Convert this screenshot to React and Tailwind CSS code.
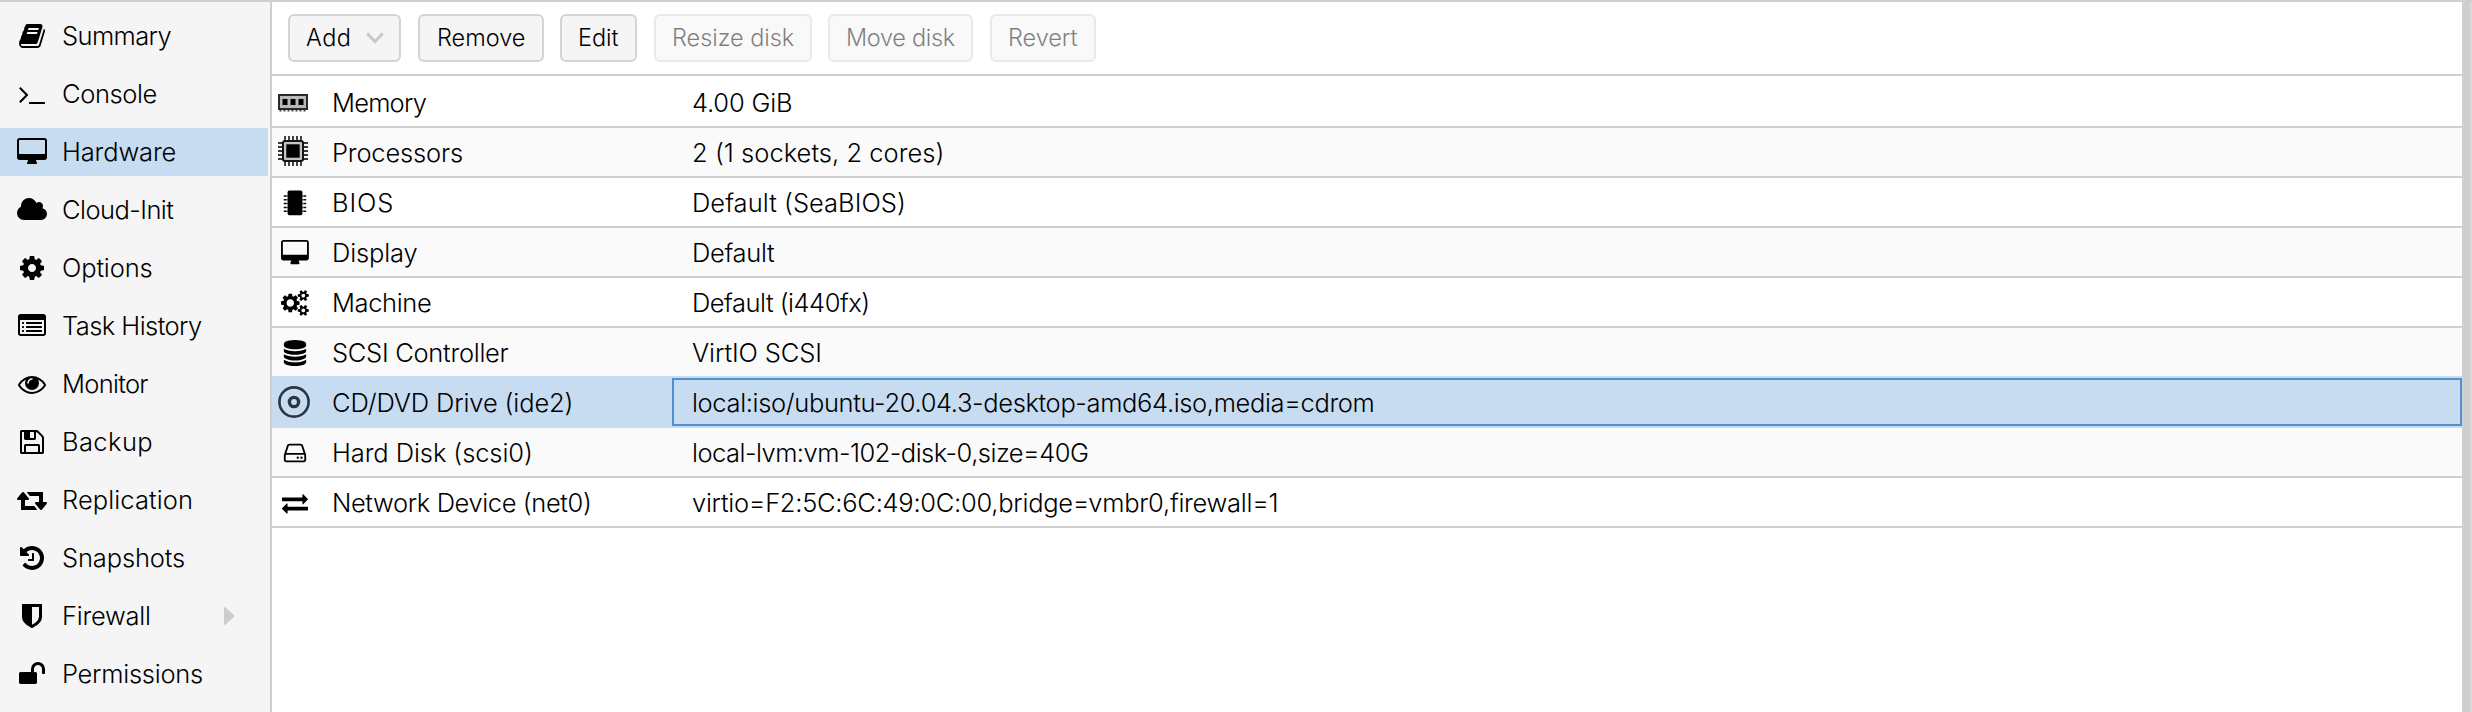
import React from "react";

const PATHS = {
  book: "M1703 478q40 57 18 129l-275 906q-19 64-76.5 107.5t-122.5 43.5h-923q-77 0-148.5-53.5t-99.5-131.5q-24-67-2-127 0-4 3-27t4-37q1-8-3-21.5t-3-19.5q2-11 8-21t16.5-23.5 16.5-23.5q23-38 45-91.5t30-91.5q3-10 .5-30t-.5-28q3-11 17-28t17-23q21-36 42-92t25-90q1-9-2.5-32t.5-28q4-13 22-30.5t22-22.5q19-26 42.5-84.5t27.5-96.5q1-8-3-25.5t-2-26.5q2-8 9-18t18-23 17-21q8-12 16.5-30.5t15-35 16-36 19.5-32 26.5-23.5 36-11.5 47.5 5.5l-1 3q38-9 51-9h761q74 0 114 56t18 130l-274 906q-36 119-71.5 153.5t-128.5 34.5h-869q-27 0-38 15-11 16-1 43 24 70 144 70h923q29 0 56-15.5t35-41.5l300-987q7-22 5-57 38 15 59 43zm-1064 2q-4 13 2 22.5t20 9.5h608q13 0 25.5-9.5t16.5-22.5l21-64q4-13-2-22.5t-20-9.5h-608q-13 0-25.5 9.5t-16.5 22.5zm-83 256q-4 13 2 22.5t20 9.5h608q13 0 25.5-9.5t16.5-22.5l21-64q4-13-2-22.5t-20-9.5h-608q-13 0-25.5 9.5t-16.5 22.5z",
  terminal: "M649 983l-466 466q-10 10-23 10t-23-10l-50-50q-10-10-10-23t10-23l393-393-393-393q-10-10-10-23t10-23l50-50q10-10 23-10t23 10l466 466q10 10 10 23t-10 23zm1079 457v64q0 14-9 23t-23 9h-960q-14 0-23-9t-9-23v-64q0-14 9-23t23-9h960q14 0 23 9t9 23z",
  desktop: "M1792 992v-832q0-13-9.5-22.5t-22.5-9.5h-1600q-13 0-22.5 9.5t-9.5 22.5v832q0 13 9.5 22.5t22.5 9.5h1600q13 0 22.5-9.5t9.5-22.5zm128-832v1088q0 66-47 113t-113 47h-544q0 37 16 77.5t32 71 16 43.5q0 26-19 45t-45 19h-512q-26 0-45-19t-19-45q0-14 16-44t32-70 16-78h-544q-66 0-113-47t-47-113v-1088q0-66 47-113t113-47h1600q66 0 113 47t47 113z",
  cloud: "M1920 1152q0 159-112.5 271.5t-271.5 112.5h-1088q-185 0-316.5-131.5t-131.5-316.5q0-132 71-241.5t187-163.5q-2-28-2-43 0-212 150-362t362-150q158 0 286.5 88t187.5 230q70-62 166-62 106 0 181 75t75 181q0 75-41 138 129 30 213 134.5t84 239.5z",
  cog: "M1152 896q0-106-75-181t-181-75-181 75-75 181 75 181 181 75 181-75 75-181zm512-109v222q0 12-8 23t-20 13l-185 28q-19 54-39 91 35 50 107 138 10 12 10 25t-9 23q-27 37-99 108t-94 71q-12 0-26-9l-138-108q-44 23-91 38-16 136-29 186-7 28-36 28h-222q-14 0-24.5-8.5t-11.5-21.5l-28-184q-49-16-90-37l-141 107q-10 9-25 9-14 0-25-11-126-114-165-168-7-10-7-23 0-12 8-23 15-21 51-66.5t54-70.5q-27-50-41-99l-183-27q-13-2-21-12.5t-8-23.5v-222q0-12 8-23t19-13l186-28q14-46 39-92-40-57-107-138-10-12-10-24 0-10 9-23 26-36 98.5-107.5t94.5-71.5q13 0 26 10l138 107q44-23 91-38 16-136 29-186 7-28 36-28h222q14 0 24.5 8.5t11.5 21.5l28 184q49 16 90 37l142-107q9-9 24-9 13 0 25 10 129 119 165 170 7 8 7 22 0 12-8 23-15 21-51 66.5t-54 70.5q26 50 41 98l183 28q13 2 21 12.5t8 23.5z",
  list: "M384 1184v64q0 13-9.5 22.5t-22.5 9.5h-64q-13 0-22.5-9.5t-9.5-22.5v-64q0-13 9.5-22.5t22.5-9.5h64q13 0 22.5 9.5t9.5 22.5zm0-256v64q0 13-9.5 22.5t-22.5 9.5h-64q-13 0-22.5-9.5t-9.5-22.5v-64q0-13 9.5-22.5t22.5-9.5h64q13 0 22.5 9.5t9.5 22.5zm0-256v64q0 13-9.5 22.5t-22.5 9.5h-64q-13 0-22.5-9.5t-9.5-22.5v-64q0-13 9.5-22.5t22.5-9.5h64q13 0 22.5 9.5t9.5 22.5zm1152 512v64q0 13-9.5 22.5t-22.5 9.5h-960q-13 0-22.5-9.5t-9.5-22.5v-64q0-13 9.5-22.5t22.5-9.5h960q13 0 22.5 9.5t9.5 22.5zm0-256v64q0 13-9.5 22.5t-22.5 9.5h-960q-13 0-22.5-9.5t-9.5-22.5v-64q0-13 9.5-22.5t22.5-9.5h960q13 0 22.5 9.5t9.5 22.5zm0-256v64q0 13-9.5 22.5t-22.5 9.5h-960q-13 0-22.5-9.5t-9.5-22.5v-64q0-13 9.5-22.5t22.5-9.5h960q13 0 22.5 9.5t9.5 22.5zm128 704v-832q0-13-9.5-22.5t-22.5-9.5h-1472q-13 0-22.5 9.5t-9.5 22.5v832q0 13 9.5 22.5t22.5 9.5h1472q13 0 22.5-9.5t9.5-22.5zm128-1088v1088q0 66-47 113t-113 47h-1472q-66 0-113-47t-47-113v-1088q0-66 47-113t113-47h1472q66 0 113 47t47 113z",
  eye: "M1664 960q-152-236-381-353 61 104 61 225 0 185-131.5 316.5t-316.5 131.5-316.5-131.5-131.5-316.5q0-121 61-225-229 117-381 353 133 205 333.5 326.5t434.5 121.5 434.5-121.5 333.5-326.5zm-720-384q0-20-14-34t-34-14q-125 0-214.5 89.5t-89.5 214.5q0 20 14 34t34 14 34-14 14-34q0-86 61-147t147-61q20 0 34-14t14-34zm848 384q0 34-20 69-140 230-376.5 368.5t-499.5 138.5-499.5-139-376.5-368q-20-35-20-69t20-69q140-229 376.5-368t499.5-139 499.5 139 376.5 368q20 35 20 69z",
  floppy: "M512 1536h768v-384h-768v384zm896 0h128v-896q0-14-10-38.5t-20-34.5l-281-281q-10-10-34-20t-39-10v416q0 40-28 68t-68 28h-576q-40 0-68-28t-28-68v-416h-128v1280h128v-416q0-40 28-68t68-28h832q40 0 68 28t28 68v416zm-384-928v-320q0-13-9.5-22.5t-22.5-9.5h-192q-13 0-22.5 9.5t-9.5 22.5v320q0 13 9.5 22.5t22.5 9.5h192q13 0 22.5-9.5t9.5-22.5zm640 32v928q0 40-28 68t-68 28h-1344q-40 0-68-28t-28-68v-1344q0-40 28-68t68-28h928q40 0 88 20t76 48l280 280q28 28 48 76t20 88z",
  retweet: "M1280 1504q0 13-9.5 22.5t-22.5 9.5h-960q-8 0-13.5-2t-9-7-5.5-8-3-11.5-1-11.5v-600h-192q-26 0-45-19t-19-45q0-24 15-41l320-384q19-22 49-22t49 22l320 384q15 17 15 41 0 26-19 45t-45 19h-192v384h576q16 0 25 11l160 192q7 10 7 21zm640-416q0 24-15 41l-320 384q-20 23-49 23t-49-23l-320-384q-15-17-15-41 0-26 19-45t45-19h192v-384h-576q-16 0-25-12l-160-192q-7-9-7-20 0-13 9.5-22.5t22.5-9.5h960q8 0 13.5 2t9 7 5.5 8 3 11.5 1 11.5v600h192q26 0 45 19t19 45z",
  history: "M1664 896q0 156-61 298t-164 245-245 164-298 61q-172 0-327-72.5t-264-204.5q-7-10-6.5-22.5t8.5-20.5l137-138q10-9 25-9 16 2 23 12 73 95 179 147t225 52q104 0 198.5-40.5t163.5-109.5 109.5-163.5 40.5-198.5-40.5-198.5-109.5-163.5-163.5-109.5-198.5-40.5q-98 0-188 35.5t-160 101.5l137 138q31 30 14 69-17 40-59 40h-448q-26 0-45-19t-19-45v-448q0-42 40-59 39-17 69 14l130 129q107-101 244.5-156.5t284.5-55.5q156 0 298 61t245 164 164 245 61 298zm-640-288v448q0 14-9 23t-23 9h-320q-14 0-23-9t-9-23v-64q0-14 9-23t23-9h224v-352q0-14 9-23t23-9h64q14 0 23 9t9 23z",
  shield: "M1344 960v-640h-448v1137q119-63 213-137 235-184 235-360zm192-768v768q0 86-33.5 170.5t-83 150-118 127.5-126.5 103-121 77.5-89.5 49.5-42.5 20q-12 6-26 6t-26-6q-16-7-42.5-20t-89.5-49.5-121-77.5-126.5-103-118-127.5-83-150-33.5-170.5v-768q0-26 19-45t45-19h1152q26 0 45 19t19 45z",
  unlock: "M1728 576v256q0 26-19 45t-45 19h-64q-26 0-45-19t-19-45v-256q0-106-75-181t-181-75-181 75-75 181v192h96q40 0 68 28t28 68v576q0 40-28 68t-68 28h-960q-40 0-68-28t-28-68v-576q0-40 28-68t68-28h672v-192q0-185 131.5-316.5t316.5-131.5 316.5 131.5 131.5 316.5z",
  cogs: "M896 896q0-106-75-181t-181-75-181 75-75 181 75 181 181 75 181-75 75-181zm768 512q0-52-38-90t-90-38-90 38-38 90q0 53 37.5 90.5t90.5 37.5 90.5-37.5 37.5-90.5zm0-1024q0-52-38-90t-90-38-90 38-38 90q0 53 37.5 90.5t90.5 37.5 90.5-37.5 37.5-90.5zm-384 421v185q0 10-7 19.5t-16 10.5l-155 24q-11 35-32 76 34 48 90 115 7 11 7 20 0 12-7 19-23 30-82.5 89.5t-78.5 59.5q-11 0-21-7l-115-90q-37 19-77 31-11 108-23 155-7 24-30 24h-186q-11 0-20-7.5t-10-17.5l-23-153q-34-10-75-31l-118 89q-7 7-20 7-11 0-21-8-144-133-144-160 0-9 7-19 10-14 41-53t47-61q-23-44-35-82l-152-24q-10-1-17-9.5t-7-19.5v-185q0-10 7-19.5t16-10.5l155-24q11-35 32-76-34-48-90-115-7-11-7-20 0-12 7-20 22-30 82-89t79-59q11 0 21 7l115 90q34-18 77-32 11-108 23-154 7-24 30-24h186q11 0 20 7.5t10 17.5l23 153q34 10 75 31l118-89q8-7 20-7 11 0 21 8 144 133 144 160 0 9-7 19-12 16-42 54t-45 60q23 48 34 82l152 23q10 2 17 10.5t7 19.5zm640 533v140q0 16-149 31-12 27-30 52 51 113 51 138 0 4-4 7-122 71-124 71-8 0-46-47t-52-68q-20 2-30 2t-30-2q-14 21-52 68t-46 47q-2 0-124-71-4-3-4-7 0-25 51-138-18-25-30-52-149-15-149-31v-140q0-16 149-31 13-29 30-52-51-113-51-138 0-4 4-7 4-2 35-20t59-34 30-16q8 0 46 46.5t52 67.5q20-2 30-2t30 2q51-71 92-112l6-2q4 0 124 70 4 3 4 7 0 25-51 138 17 23 30 52 149 15 149 31zm0-1024v140q0 16-149 31-12 27-30 52 51 113 51 138 0 4-4 7-122 71-124 71-8 0-46-47t-52-68q-20 2-30 2t-30-2q-14 21-52 68t-46 47q-2 0-124-71-4-3-4-7 0-25 51-138-18-25-30-52-149-15-149-31v-140q0-16 149-31 13-29 30-52-51-113-51-138 0-4 4-7 4-2 35-20t59-34 30-16q8 0 46 46.5t52 67.5q20-2 30-2t30 2q51-71 92-112l6-2q4 0 124 70 4 3 4 7 0 25-51 138 17 23 30 52 149 15 149 31z",
  database: "M896 768q237 0 443-43t325-127v170q0 69-103 128t-280 93.5-385 34.5-385-34.5-280-93.5-103-128v-170q119 84 325 127t443 43zm0 768q237 0 443-43t325-127v170q0 69-103 128t-280 93.5-385 34.5-385-34.5-280-93.5-103-128v-170q119 84 325 127t443 43zm0-384q237 0 443-43t325-127v170q0 69-103 128t-280 93.5-385 34.5-385-34.5-280-93.5-103-128v-170q119 84 325 127t443 43zm0-1152q208 0 385 34.5t280 93.5 103 128v128q0 69-103 128t-280 93.5-385 34.5-385-34.5-280-93.5-103-128v-128q0-69 103-128t280-93.5 385-34.5z",
  hdd: "M1168 1216q0 33-23.5 56.5t-56.5 23.5-56.5-23.5-23.5-56.5 23.5-56.5 56.5-23.5 56.5 23.5 23.5 56.5zm256 0q0 33-23.5 56.5t-56.5 23.5-56.5-23.5-23.5-56.5 23.5-56.5 56.5-23.5 56.5 23.5 23.5 56.5zm112 160v-320q0-13-9.5-22.5t-22.5-9.5h-1216q-13 0-22.5 9.5t-9.5 22.5v320q0 13 9.5 22.5t22.5 9.5h1216q13 0 22.5-9.5t9.5-22.5zm-1230-480h1180l-157-482q-4-13-16-21.5t-26-8.5h-782q-14 0-26 8.5t-16 21.5zm1358 160v320q0 66-47 113t-113 47h-1216q-66 0-113-47t-47-113v-320q0-25 16-75l197-606q17-53 63-86t101-33h782q55 0 101 33t63 86l197 606q16 50 16 75z",
  exchange: "M1792 1184v192q0 13-9.5 22.5t-22.5 9.5h-1376v192q0 13-9.5 22.5t-22.5 9.5q-12 0-24-10l-319-320q-9-9-9-22 0-14 9-23l320-320q9-9 23-9 13 0 22.5 9.5t9.5 22.5v192h1376q13 0 22.5 9.5t9.5 22.5zm0-544q0 14-9 23l-320 320q-9 9-23 9-13 0-22.5-9.5t-9.5-22.5v-192h-1376q-13 0-22.5-9.5t-9.5-22.5v-192q0-13 9.5-22.5t22.5-9.5h1376v-192q0-14 9-23t23-9q12 0 24 10l319 319q9 9 9 23z",
};

const WIDE = ["desktop", "cloud", "retweet", "cogs"];

function Glyph({ name, className }) {
  return (
    <svg viewBox={WIDE.includes(name) ? "0 0 1920 1792" : "0 0 1792 1792"} className={className} fill="currentColor">
      <path d={PATHS[name]} />
    </svg>
  );
}

function MemoryIcon() {
  return (
    <svg viewBox="0 0 30 18" className="h-[18px] w-[30px]">
      <path d="M2.5 15v2.5M6.5 15v2.5M10.5 15v2.5M14.5 15v2.5M18.5 15v2.5M22.5 15v2.5M26.5 15v2.5" stroke="#444" strokeWidth="2" />
      <rect x="1" y="1" width="28" height="14" fill="#b8b8b8" stroke="#2a2a2a" strokeWidth="2" />
      <path d="M4.5 5h5v6h-5zM12.5 5h5v6h-5zM20.5 5h5v6h-5z" fill="#000" />
    </svg>
  );
}

function CpuIcon() {
  return (
    <svg viewBox="0 0 30 30" className="-mt-1 h-[30px] w-[30px]">
      <path
        d="M7 0v30M11 0v30M15 0v30M19 0v30M23 0v30M0 7h30M0 11h30M0 15h30M0 19h30M0 23h30"
        stroke="#3a3a3a"
        strokeWidth="1.9"
      />
      <rect x="5" y="5" width="20" height="20" rx="2" fill="#c4c4c4" stroke="#161616" strokeWidth="2" />
      <path d="M8.3 8.3h13.4v13.4H8.3z" fill="#000" />
    </svg>
  );
}

function ChipIcon() {
  return (
    <svg viewBox="0 0 24 26" className="ml-[5px] h-[26px] w-6">
      <path d="M.8 6h22.4M.8 9.8h22.4M.8 13.6h22.4M.8 17.4h22.4M.8 21.2h22.4" stroke="#000" strokeWidth="1.5" />
      <rect x="3.4" y=".6" width="17.2" height="24.6" fill="#fff" fillOpacity=".45" />
      <rect x="4.6" y=".6" width="14.8" height="24.6" rx="1.6" fill="#000" />
    </svg>
  );
}

function DiscIcon() {
  return (
    <svg viewBox="0 0 32 32" className="-mt-0.5 h-8 w-8" fill="none">
      <circle cx="16" cy="16" r="14.6" stroke="#2b3641" strokeWidth="2.6" />
      <circle cx="16" cy="16" r="4.6" stroke="#2b3641" strokeWidth="3.4" />
    </svg>
  );
}

const NAV = [
  ["book", "Summary", "tracking-[-0.62px]"],
  ["terminal", "Console", "tracking-[-0.4px]"],
  ["desktop", "Hardware", "tracking-[-0.14px]"],
  ["cloud", "Cloud-Init", "tracking-[-0.55px]"],
  ["cog", "Options", "tracking-[-0.15px]"],
  ["list", "Task History", "tracking-[-0.56px]"],
  ["eye", "Monitor", "tracking-[-0.7px]"],
  ["floppy", "Backup", "tracking-[0.4px]"],
  ["retweet", "Replication", "tracking-[0.09px]"],
  ["history", "Snapshots", "tracking-[-0.14px]"],
  ["shield", "Firewall", "tracking-[-0.25px]"],
  ["unlock", "Permissions", "tracking-[-0.27px]"],
];

const BUTTONS = [
  { label: "Add", box: "w-[113px] pl-4", text: "w-11 tracking-[0.5px]", menu: true },
  { label: "Remove", box: "ml-[17px] w-[126px] pl-[17px]", text: "tracking-normal" },
  { label: "Edit", box: "ml-4 w-[77px] pl-4", text: "tracking-[-0.05px]" },
  { label: "Resize disk", box: "ml-[17px] w-[158px] pl-4", text: "tracking-[-0.04px]", off: true },
  { label: "Move disk", box: "ml-4 w-[145px] pl-4", text: "tracking-[-0.3px]", off: true },
  { label: "Revert", box: "ml-[17px] w-[106px] pl-4", text: "tracking-[-0.06px]", off: true },
];

const ROWS = [
  { icon: <MemoryIcon />, key: "Memory", kt: "tracking-[-0.8px]", value: "4.00 GiB", vt: "tracking-[-0.19px]" },
  { icon: <CpuIcon />, key: "Processors", kt: "tracking-[-0.17px]", value: "2 (1 sockets, 2 cores)", vt: "tracking-[0.03px]" },
  { icon: <ChipIcon />, key: "BIOS", kt: "tracking-[0.9px]", value: "Default (SeaBIOS)", vt: "tracking-[0.03px]" },
  { fa: "desktop", key: "Display", kt: "tracking-[-0.14px]", value: "Default", vt: "tracking-[-0.32px]" },
  { fa: "cogs", key: "Machine", kt: "tracking-[-0.37px]", value: "Default (i440fx)", vt: "tracking-[-0.5px]" },
  { fa: "database", key: "SCSI Controller", kt: "tracking-[-0.28px]", value: "VirtIO SCSI", vt: "tracking-[-0.1px]" },
  {
    icon: <DiscIcon />,
    key: "CD/DVD Drive (ide2)",
    kt: "tracking-[-0.13px]",
    value: "local:iso/ubuntu-20.04.3-desktop-amd64.iso,media=cdrom",
    vt: "tracking-[-0.36px]",
    selected: true,
  },
  { fa: "hdd", key: "Hard Disk (scsi0)", kt: "tracking-[-0.09px]", value: "local-lvm:vm-102-disk-0,size=40G", vt: "tracking-[-0.52px]" },
  {
    fa: "exchange",
    key: "Network Device (net0)",
    kt: "tracking-[-0.39px]",
    value: "virtio=F2:5C:6C:49:0C:00,bridge=vmbr0,firewall=1",
    vt: "tracking-[-0.27px]",
  },
];

function Row({ row, index }) {
  const bg = row.selected
    ? "-mt-0.5 h-[52px] border-[#c7dbf1] bg-[#c7dbf1] pt-0.5"
    : index % 2
      ? "h-[50px] border-[#cfcfcf] bg-[#fafafa]"
      : "h-[50px] border-[#cfcfcf] bg-white";
  return (
    <div className={`flex shrink-0 border-b-2 pl-1.5 ${bg}`}>
      <div className={`flex w-[34px] items-center pt-0.5 ${row.fa ? "justify-center" : "justify-start"}`}>
        {row.icon || (
          <Glyph name={row.fa} className={WIDE.includes(row.fa) ? "h-[26px] w-[27.86px]" : "h-[26px] w-[26px]"} />
        )}
      </div>
      <div className={`flex w-[360px] items-center pt-0.5 pl-5 ${row.kt}`}>{row.key}</div>
      <div
        className={`flex flex-1 items-center border-2 pl-[18px] ${row.vt} ${row.selected ? "border-[#5190cf]" : "border-transparent"}`}
      >
        <span className="pt-0.5">{row.value}</span>
      </div>
    </div>
  );
}

export default function App() {
  return (
    <div className="flex h-[712px] w-[2472px] flex-col overflow-hidden border-t-2 border-[#cfcfcf] bg-white font-['Inter','Liberation_Sans',sans-serif] text-[25.5px] leading-8 font-light whitespace-nowrap text-black">
      <div className="flex min-h-0 flex-1">
        <nav className="flex w-[272px] shrink-0 flex-col gap-2.5 border-r-2 border-[#cfcfcf] bg-[#f5f5f5] pt-2.5 pr-0.5">
          {NAV.map(([icon, label, tracking]) => (
            <div key={label} className={`flex h-12 shrink-0 items-center pl-4 ${label === "Hardware" ? "bg-[#c7dbf1]" : ""}`}>
              <div className="flex w-8 justify-center">
                <Glyph name={icon} className={WIDE.includes(icon) ? "h-7 w-[30px]" : "h-7 w-7"} />
              </div>
              <span className={`ml-3.5 flex-1 ${tracking}`}>{label}</span>
              {label === "Firewall" && (
                <svg viewBox="0 0 11 20" className="mr-[33px] h-5 w-[11px]" fill="#cccccc">
                  <path d="M0 1.6Q0 .2 1 1.1L10.4 9.4Q11 10 10.4 10.6L1 18.9Q0 19.8 0 18.4Z" />
                </svg>
              )}
            </div>
          ))}
        </nav>

        <main className="flex min-w-0 flex-1 flex-col">
          <div className="flex h-[74px] shrink-0 items-center border-b-2 border-[#cfcfcf] pl-4 text-[23.5px]">
            {BUTTONS.map((b) => (
              <button
                key={b.label}
                disabled={b.off}
                className={`flex h-12 items-center rounded-md border-2 border-[#d4d4d4] bg-[#f5f5f5] ${b.box} ${b.off ? "opacity-50" : ""}`}
              >
                <span className={b.text}>{b.label}</span>
                {b.menu && (
                  <svg viewBox="0 0 18 12" className="ml-4 h-3 w-[18px]" fill="none" stroke="#c9c9c9" strokeWidth="3">
                    <path d="M1.2 1.4L9 9.6L16.8 1.4" />
                  </svg>
                )}
              </button>
            ))}
          </div>
          <div className="flex h-0.5 shrink-0 bg-white" />
          {ROWS.map((row, i) => (
            <Row key={row.key} row={row} index={i} />
          ))}
        </main>

        <div className="w-2.5 shrink-0 border-r-2 border-[#d9d9d9] bg-[#cfcfcf]" />
      </div>
    </div>
  );
}
